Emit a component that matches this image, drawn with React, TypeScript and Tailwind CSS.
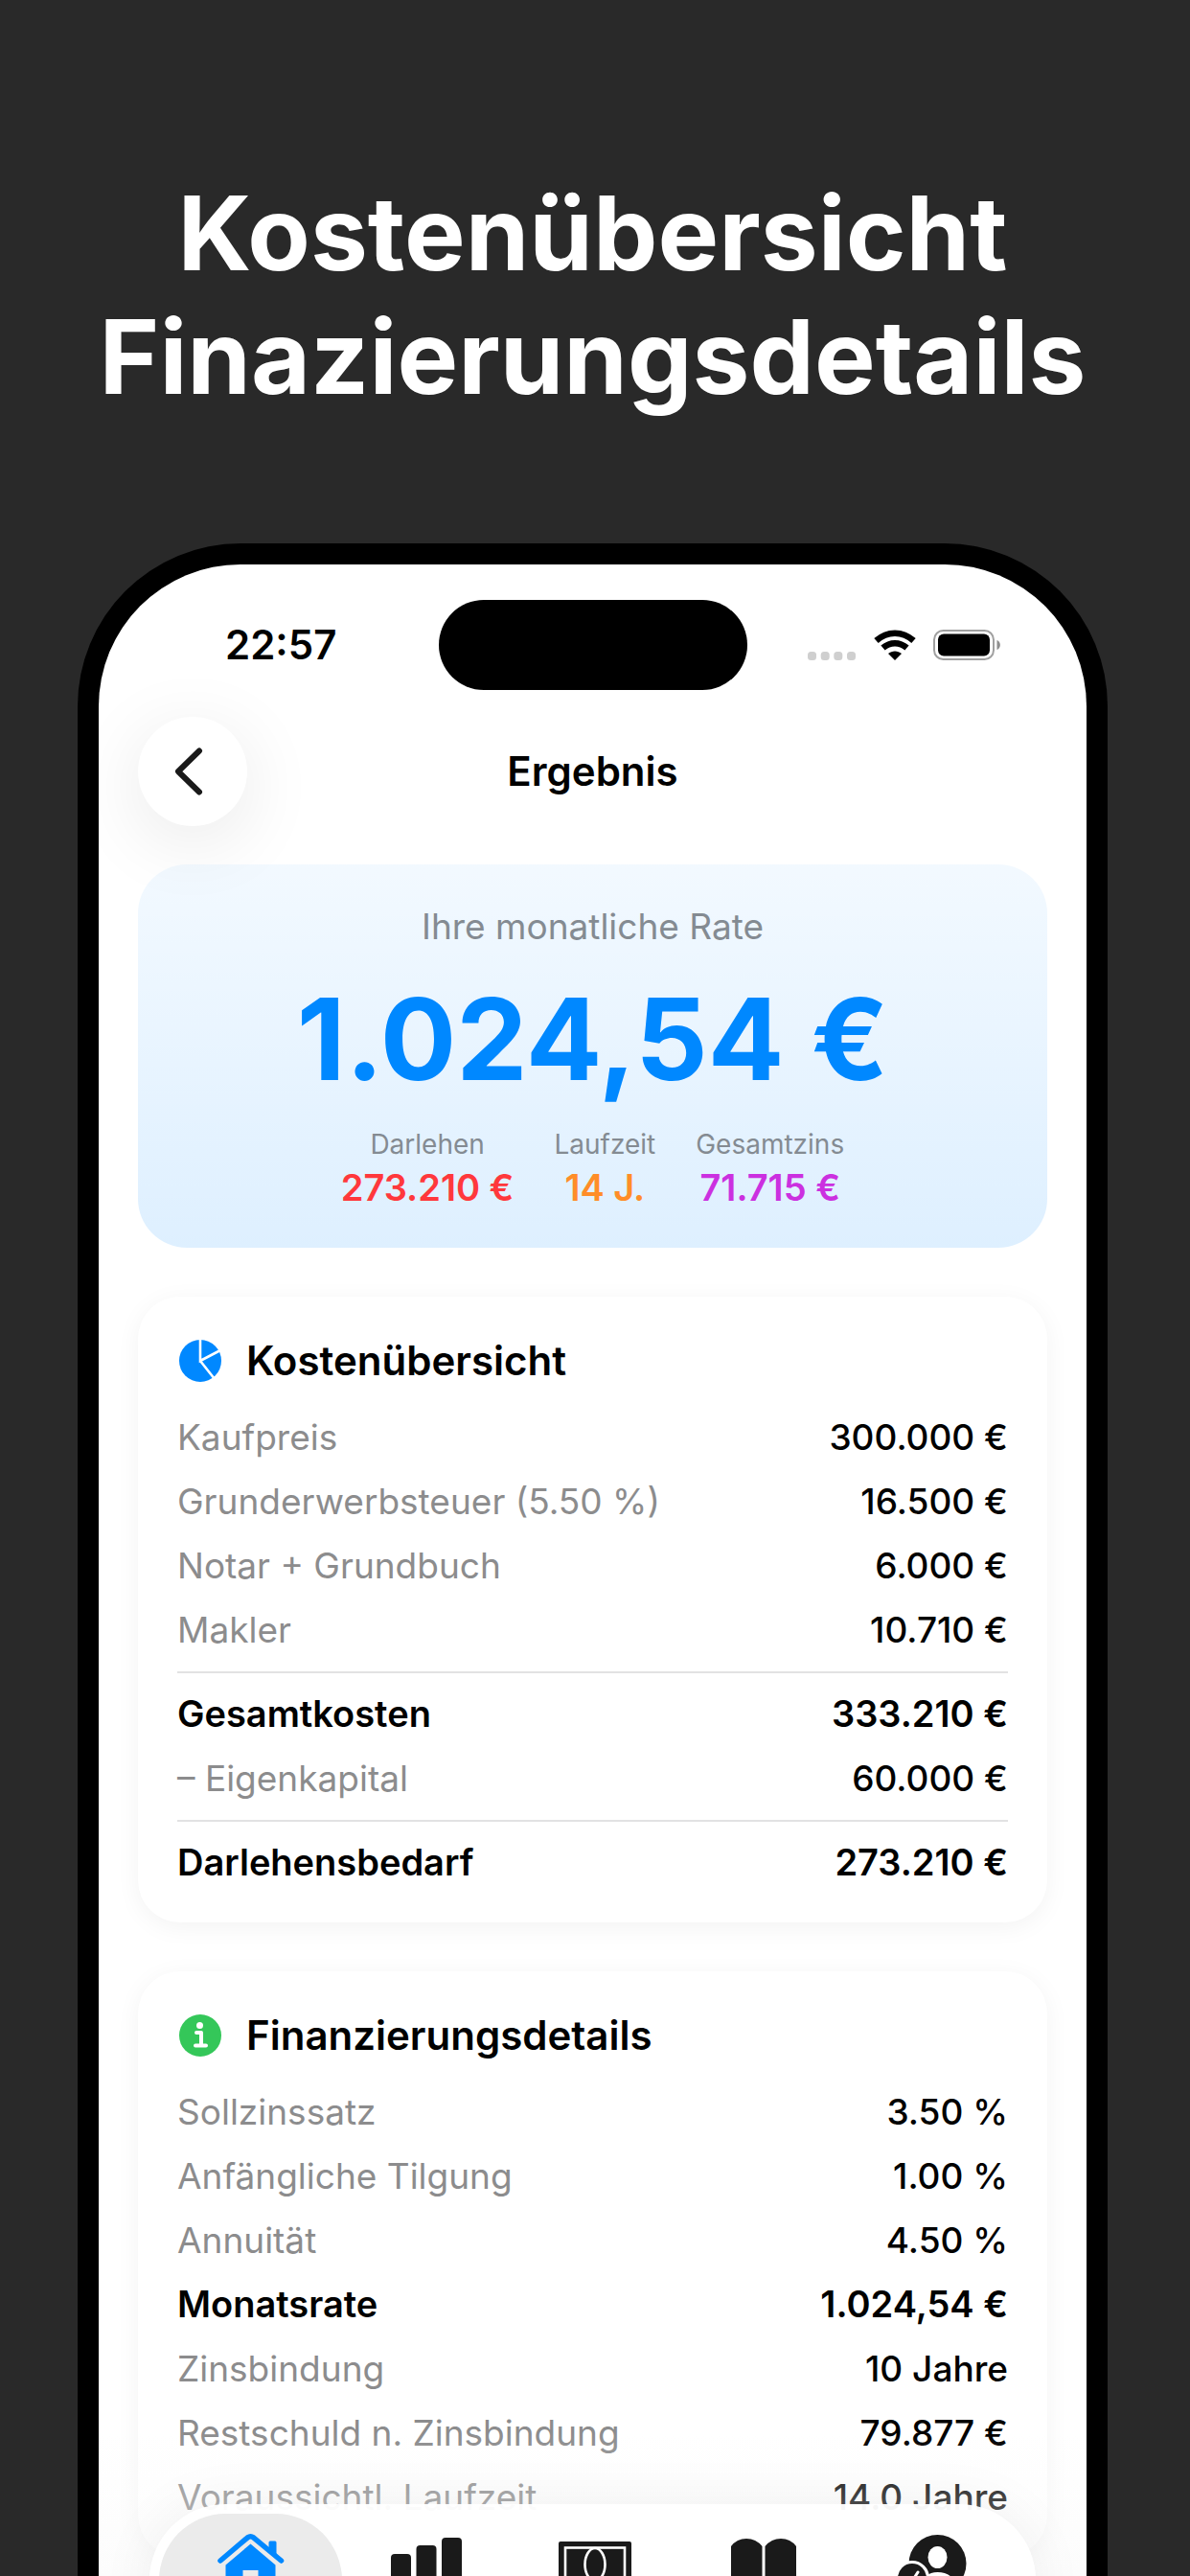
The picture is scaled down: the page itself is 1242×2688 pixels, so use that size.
import type { ReactNode } from "react";

type Row = {
  label: string;
  value: string;
  bold?: boolean;
  divider?: boolean;
};

const costs: Row[] = [
  { label: "Kaufpreis", value: "300.000 €" },
  { label: "Grunderwerbsteuer (5.50 %)", value: "16.500 €" },
  { label: "Notar + Grundbuch", value: "6.000 €" },
  { label: "Makler", value: "10.710 €" },
  { label: "Gesamtkosten", value: "333.210 €", bold: true, divider: true },
  { label: "– Eigenkapital", value: "60.000 €" },
  { label: "Darlehensbedarf", value: "273.210 €", bold: true, divider: true },
];

const details: Row[] = [
  { label: "Sollzinssatz", value: "3.50 %" },
  { label: "Anfängliche Tilgung", value: "1.00 %" },
  { label: "Annuität", value: "4.50 %" },
  { label: "Monatsrate", value: "1.024,54 €", bold: true },
  { label: "Zinsbindung", value: "10 Jahre" },
  { label: "Restschuld n. Zinsbindung", value: "79.877 €" },
  { label: "Voraussichtl. Laufzeit", value: "14.0 Jahre" },
];

const stats = [
  { label: "Darlehen", value: "273.210 €", color: "text-[#ff383c]" },
  { label: "Laufzeit", value: "14 J.", color: "text-[#ff8d28]" },
  { label: "Gesamtzins", value: "71.715 €", color: "text-[#cb30e0]" },
];

function PieIcon() {
  return (
    <svg viewBox="0 0 46 46" className="h-[46px] w-[46px]" aria-hidden="true">
      <circle cx="24" cy="23" r="22" fill="#0088ff" />
      <path d="M24 0V23L45 12M24 23L39 42" fill="none" stroke="#fff" strokeWidth="2.6" />
    </svg>
  );
}

function InfoIcon() {
  return (
    <svg viewBox="0 0 46 46" className="h-[46px] w-[46px]" aria-hidden="true">
      <circle cx="24" cy="23" r="22" fill="#34c759" />
      <circle cx="23.5" cy="12.5" r="3.5" fill="#fff" />
      <path d="M20 20H25V33M19 33.5H30" fill="none" stroke="#fff" strokeWidth="4" strokeLinecap="round" strokeLinejoin="round" />
    </svg>
  );
}

function StatusIcons() {
  return (
    <div className="flex items-center">
      <svg viewBox="0 0 50 32" className="mr-[19px] h-[32px] w-[50px]" aria-hidden="true">
        <g fill="#cfcfcf">
          <rect x="0" y="23" width="9" height="9" rx="3.5" />
          <rect x="13.7" y="23" width="9" height="9" rx="3.5" />
          <rect x="27.3" y="23" width="9" height="9" rx="3.5" />
          <rect x="41" y="23" width="9" height="9" rx="3.5" />
        </g>
      </svg>
      <svg viewBox="0 0 44 32" className="mr-[18px] h-[32px] w-[44px]" aria-hidden="true">
        <path d="M2.5 11.5C14 1 30 1 41.5 11.5" fill="none" stroke="#000" strokeWidth="6.5" />
        <path d="M9.5 19C17 12.5 27 12.5 34.5 19" fill="none" stroke="#000" strokeWidth="6.5" />
        <path d="M15 25C19 21.5 25 21.5 29 25L22 32Z" fill="#000" />
      </svg>
      <svg viewBox="0 0 71 32" className="h-[32px] w-[71px]" aria-hidden="true">
        <rect x="1" y="1" width="62" height="30" rx="9.5" fill="none" stroke="#a0a0a0" strokeWidth="2" />
        <rect x="5" y="4.5" width="54" height="23" rx="6" fill="#000" />
        <path d="M66.5 11C71 12.5 71 19.5 66.5 21Z" fill="#8e8e8e" />
      </svg>
    </div>
  );
}

function HouseIcon() {
  return (
    <svg viewBox="0 0 70 62" className="h-[62px] w-[70px]" aria-hidden="true">
      <path d="M3 29L31.5 4.8Q34.5 2.6 37.5 4.8L66.5 29" fill="none" stroke="#0088ff" strokeWidth="5.5" strokeLinecap="round" strokeLinejoin="round" />
      <path d="M53.5 10Q53.5 8.5 55 8.5H60Q61.5 8.5 61.5 10V25L53.5 18.5Z" fill="#0088ff" />
      <path d="M8.5 33.5L34.5 11.5L60.5 33.5V61H42.5V39H26.5V61H8.5Z" fill="#0088ff" />
    </svg>
  );
}

function BarsIcon() {
  return (
    <svg viewBox="0 0 74 62" className="h-[62px] w-[74px]" aria-hidden="true">
      <g fill="#1a1a1a">
        <rect x="0" y="22" width="21" height="40" rx="4" />
        <rect x="26.5" y="13" width="21" height="49" rx="4" />
        <rect x="53" y="5" width="21" height="57" rx="4" />
      </g>
    </svg>
  );
}

function BanknoteIcon() {
  return (
    <svg viewBox="0 0 76 62" className="h-[62px] w-[76px]" aria-hidden="true">
      <rect x="0" y="9" width="76" height="53" rx="2" fill="#1a1a1a" />
      <rect x="7" y="15.5" width="62" height="40" fill="none" stroke="#fff" strokeWidth="2.6" />
      <ellipse cx="38" cy="33" rx="10.5" ry="17" fill="none" stroke="#fff" strokeWidth="2.6" />
    </svg>
  );
}

function BookIcon() {
  return (
    <svg viewBox="0 0 68 62" className="h-[62px] w-[68px]" aria-hidden="true">
      <g fill="#1a1a1a">
        <path d="M0 14Q6 6 16 6Q26 6 32.5 14V62H0Z" />
        <path d="M35.5 14Q42 6 52 6Q62 6 68 14V62H35.5Z" />
      </g>
    </svg>
  );
}

function PersonIcon() {
  return (
    <svg viewBox="0 0 72 62" className="h-[62px] w-[72px]" aria-hidden="true">
      <circle cx="41.5" cy="32" r="30" fill="#1a1a1a" />
      <ellipse cx="41.5" cy="25.5" rx="10" ry="11.5" fill="#fff" />
      <path d="M26 54Q28 41 41.5 41Q55 41 60 52L50 62H26Z" fill="#fff" />
      <circle cx="15" cy="47" r="16.5" fill="#1a1a1a" stroke="#fff" strokeWidth="3" />
      <path d="M21 41L14 52" fill="none" stroke="#fff" strokeWidth="3" strokeLinecap="round" />
    </svg>
  );
}

function Card({ title, icon, rows }: { title: string; icon: ReactNode; rows: Row[] }) {
  return (
    <section className="rounded-[44px] bg-white px-[41px] pt-[41px] pb-[37px] shadow-[0_5px_26px_rgba(0,0,0,0.05)]">
      <h2 className="mb-[28px] flex items-center gap-[26px] text-[42px] leading-[52px] font-semibold">
        {icon}
        {title}
      </h2>
      <dl className="flex flex-col gap-4 text-[37px] leading-[51px]">
        {rows.map((row) => (
          <div
            key={row.label}
            className={
              row.divider
                ? "mt-[2px] flex justify-between border-t-2 border-[#e2e2e3] pt-[17px]"
                : "flex justify-between"
            }
          >
            <dt className={row.bold ? "text-[38px] font-semibold" : "text-[#8c8c8d]"}>{row.label}</dt>
            <dd className={row.bold ? "text-[38px] font-semibold" : "font-medium"}>{row.value}</dd>
          </div>
        ))}
      </dl>
    </section>
  );
}

function TabBar() {
  return (
    <nav className="absolute inset-x-[53px] -bottom-[84px] z-10 flex h-[159px] rounded-full bg-white/95 py-[10px] pr-5 pl-[10px] shadow-[0_0_60px_rgba(0,0,0,0.06)]">
      <button type="button" aria-label="Start" className="flex w-[191px] justify-center rounded-full bg-[#ebebeb] pt-5">
        <HouseIcon />
      </button>
      <button type="button" aria-label="Vergleich" className="flex flex-1 justify-center pt-5">
        <BarsIcon />
      </button>
      <button type="button" aria-label="Finanzierung" className="flex flex-1 justify-center pt-5">
        <BanknoteIcon />
      </button>
      <button type="button" aria-label="Wissen" className="flex flex-1 justify-center pt-5">
        <BookIcon />
      </button>
      <button type="button" aria-label="Profil" className="flex flex-1 justify-center pt-5">
        <PersonIcon />
      </button>
    </nav>
  );
}

function App() {
  return (
    <main className="flex h-screen flex-col overflow-hidden bg-[#292929] pt-[179px] pr-[86px] pl-[81px] font-['Inter',sans-serif] text-black">
      <h1 className="text-center text-[107px] leading-[129px] font-bold whitespace-nowrap text-white">
        Kostenübersicht
        <br />
        Finazierungsdetails
      </h1>

      <div className="relative mt-[130px] min-h-0 flex-1 overflow-hidden rounded-t-[170px] border-x-[22px] border-t-[22px] border-black bg-white">
        <div className="grid grid-cols-[1fr_auto_1fr] items-center px-[89px] pt-[37px]">
          <span className="pl-[43px] text-[42px] leading-[52px] font-semibold">22:57</span>
          <div className="h-[94px] w-[322px] rounded-full bg-black" />
          <div className="flex justify-end">
            <StatusIcons />
          </div>
        </div>

        <header className="mt-7 grid grid-cols-[1fr_auto_1fr] items-center px-[41px]">
          <button
            type="button"
            aria-label="Zurück"
            className="flex h-[114px] w-[114px] items-center justify-center rounded-full bg-white shadow-[0_16px_80px_rgba(0,0,0,0.09)]"
          >
            <svg viewBox="0 0 30 50" className="mr-2 h-[50px] w-[30px]" aria-hidden="true">
              <path d="M26 3.5L4 25L26 46.5" fill="none" stroke="#1a1a1a" strokeWidth="6" strokeLinecap="round" strokeLinejoin="round" />
            </svg>
          </button>
          <h2 className="text-[42px] leading-[52px] font-semibold">Ergebnis</h2>
        </header>

        <div className="mt-10 flex flex-col gap-[51px] px-[41px]">
          <section className="flex flex-col items-center rounded-[51px] bg-linear-to-b from-[#0088ff]/5 to-[#0088ff]/13 pt-[39px] pb-[37px]">
            <p className="text-[37px] leading-[51px] text-[#848b92]">Ihre monatliche Rate</p>
            <p className="mt-[18px] text-[118px] leading-[148px] font-bold text-[#0088ff]">1.024,54 €</p>
            <dl className="mt-4 flex gap-[42px] text-center">
              {stats.map((stat) => (
                <div key={stat.label}>
                  <dt className="text-[28px] leading-10 text-[#848b92]">{stat.label}</dt>
                  <dd className={`text-[38px] leading-[51px] font-semibold ${stat.color}`}>{stat.value}</dd>
                </div>
              ))}
            </dl>
          </section>

          <Card title="Kostenübersicht" icon={<PieIcon />} rows={costs} />
          <Card title="Finanzierungsdetails" icon={<InfoIcon />} rows={details} />
        </div>

        {/* content fades out behind the tab bar */}
        <div className="pointer-events-none absolute inset-x-0 bottom-0 h-[150px] bg-linear-to-b from-[#fafafa]/0 to-[#fafafa]/60" />
        <TabBar />
      </div>
    </main>
  );
}

export default App;
